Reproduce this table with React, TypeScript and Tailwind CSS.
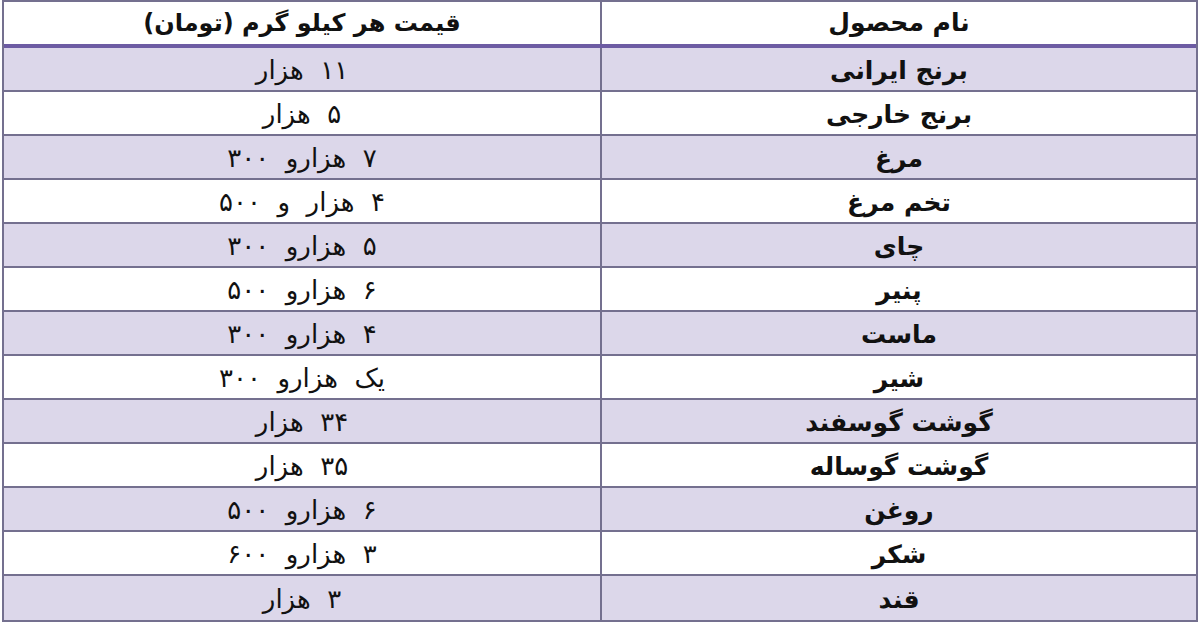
const rows: [string, string][] = [
  ["برنج ایرانی", "۱۱ هزار"],
  ["برنج خارجی", "۵ هزار"],
  ["مرغ", "۷ هزارو ۳۰۰"],
  ["تخم مرغ", "۴ هزار و ۵۰۰"],
  ["چای", "۵ هزارو ۳۰۰"],
  ["پنیر", "۶ هزارو ۵۰۰"],
  ["ماست", "۴ هزارو ۳۰۰"],
  ["شیر", "یک هزارو ۳۰۰"],
  ["گوشت گوسفند", "۳۴ هزار"],
  ["گوشت گوساله", "۳۵ هزار"],
  ["روغن", "۶ هزارو ۵۰۰"],
  ["شکر", "۳ هزارو ۶۰۰"],
  ["قند", "۳ هزار"],
];

// spread the persian digits a little, like the original
function Price({ text }: { text: string }) {
  const parts = text.split(/([۰-۹]+)/);
  return (
    <span>
      {parts.map((p, i) =>
        /[۰-۹]/.test(p) ? (
          <span key={i} className="tracking-[5px]">
            {p}
          </span>
        ) : (
          <span key={i}>{p.replace(/ /g, "  ")}</span>
        )
      )}
    </span>
  );
}

export default function App() {
  return (
    <div className="w-[1200px] h-[627px] bg-white">
      <div
        dir="rtl"
        className="ml-[2px] w-[1196px] border-2 border-[#74708f] text-[#111]"
        style={{ fontFamily: '"DejaVu Sans", "Noto Sans", sans-serif' }}
      >
        <div className="grid grid-cols-2 h-[46px] bg-white border-b-4 border-[#6d5ca3] font-bold">
          <div className="flex items-center justify-center border-l-2 border-[#74708f] text-[25px]">
            نام محصول
          </div>
          <div className="flex items-center justify-center text-[24px]">
            قیمت هر کیلو گرم (تومان)
          </div>
        </div>
        {rows.map(([name, price], i) => (
          <div
            key={name}
            className={`grid grid-cols-2 h-[44px] ${
              i < rows.length - 1 ? "border-b-2 border-[#74708f]" : ""
            } ${i % 2 === 0 ? "bg-[#dcd7ea]" : "bg-white"}`}
          >
            <div className="flex items-center justify-center border-l-2 border-[#74708f] font-bold text-[25px] pt-[3px]">
              {name}
            </div>
            <div className="flex items-center justify-center text-[26px] whitespace-pre pt-[3px]">
              <Price text={price} />
            </div>
          </div>
        ))}
      </div>
    </div>
  );
}
